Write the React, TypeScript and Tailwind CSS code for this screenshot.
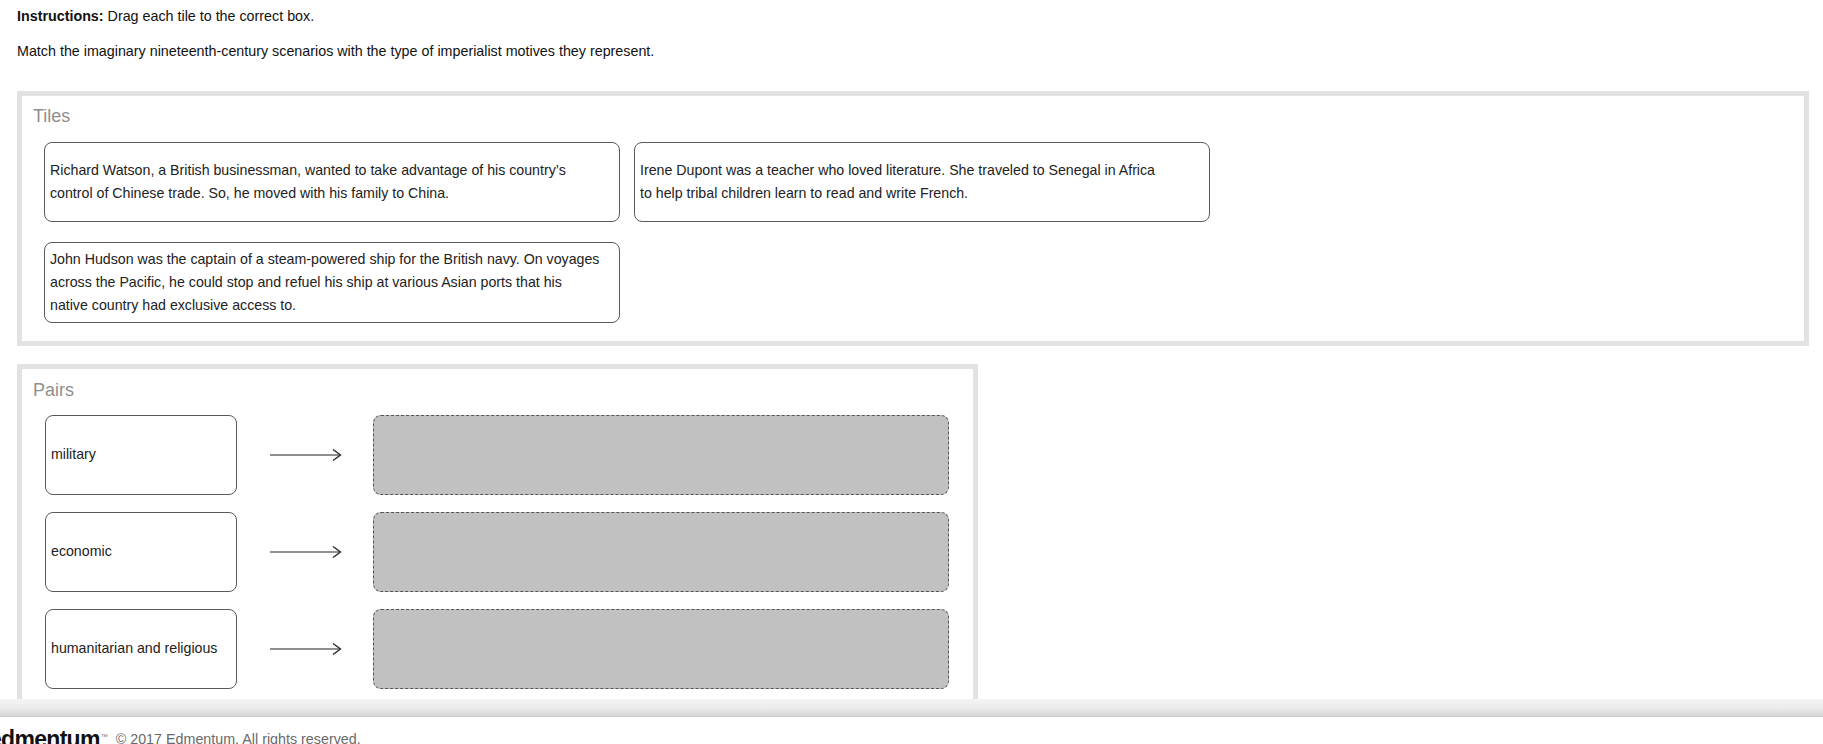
import type { ReactNode } from 'react';

const tiles: string[][] = [
  [
    'Richard Watson, a British businessman, wanted to take advantage of his country’s',
    'control of Chinese trade. So, he moved with his family to China.',
  ],
  [
    'Irene Dupont was a teacher who loved literature. She traveled to Senegal in Africa',
    'to help tribal children learn to read and write French.',
  ],
  [
    'John Hudson was the captain of a steam-powered ship for the British navy. On voyages',
    'across the Pacific, he could stop and refuel his ship at various Asian ports that his',
    'native country had exclusive access to.',
  ],
];

const pairs = ['military', 'economic', 'humanitarian and religious'];

function Arrow() {
  return (
    <svg width="72" height="14" viewBox="0 0 72 14" className="shrink-0">
      <line x1="0" y1="7" x2="70" y2="7" stroke="#222" strokeWidth="1.2" />
      <polyline points="63,1.5 70.5,7 63,12.5" fill="none" stroke="#222" strokeWidth="1.3" />
    </svg>
  );
}

function Panel({ title, children, className }: { title: string; children: ReactNode; className: string }) {
  return (
    <div className={`border-[5px] border-[#e2e2e2] bg-white ${className}`}>
      <h2 className="pl-[11px] text-[18px] leading-[22px] text-[#8f8f8f] font-normal">{title}</h2>
      {children}
    </div>
  );
}

export default function App() {
  return (
    <div className="h-[744px] overflow-hidden flex flex-col bg-white text-[#111] font-['Liberation_Sans',Arial,sans-serif]">
      <div className="h-[699px] shrink-0 overflow-hidden pl-[17px]">
        <p className="pt-[7px] text-[14.3px] leading-[18px]">
          <span className="font-bold">Instructions:</span> Drag each tile to the correct box.
        </p>
        <p className="mt-[17px] text-[14.3px] leading-[18px]">
          Match the imaginary nineteenth-century scenarios with the type of imperialist motives they represent.
        </p>

        <Panel title="Tiles" className="mt-[31px] w-[1792px] pt-[9px] pb-[18px]">
          <div className="mt-[15px] pl-[22px] grid grid-cols-[576px_576px] gap-x-[14px] gap-y-[20px]">
            {tiles.map((lines, i) => (
              <div
                key={i}
                className="min-h-[80px] flex flex-col justify-center px-[5px] py-[5px] border border-[#5a5a5a] rounded-[8px] text-[14.2px] leading-[23px] text-[#222]"
              >
                {lines.map(l => (
                  <span key={l} className="whitespace-nowrap">{l}</span>
                ))}
              </div>
            ))}
          </div>
        </Panel>

        <Panel title="Pairs" className="mt-[18px] w-[961px] pt-[10px] pb-[20px]">
          <div className="mt-[14px] pl-[23px] flex flex-col gap-[17px]">
            {pairs.map(p => (
              <div key={p} className="flex items-center">
                <div className="w-[192px] h-[80px] flex items-center px-[5px] border border-[#5a5a5a] rounded-[8px] text-[14.2px] text-[#222]">
                  {p}
                </div>
                <div className="ml-[33px] mr-[31px]">
                  <Arrow />
                </div>
                <div className="w-[576px] h-[80px] bg-[#c1c1c1] border border-dashed border-[#555] rounded-[8px]" />
              </div>
            ))}
          </div>
        </Panel>
      </div>

      <div className="h-[18px] shrink-0 bg-gradient-to-b from-[#f4f4f4] via-[#ececec] to-[#d6d6d6] border-b border-[#c9c9c9]" />

      <div className="mt-[10px] flex items-center">
        <span className="-ml-[11px] text-[23px] leading-[24px] font-bold tracking-[-0.7px] text-[#111]">edmentum</span>
        <span className="ml-[1px] text-[7px] leading-none self-start mt-[6px] text-[#777]">™</span>
        <span className="ml-[8px] text-[14.3px] leading-[18px] text-[#6a6a6a]">© 2017 Edmentum. All rights reserved.</span>
      </div>
    </div>
  );
}
